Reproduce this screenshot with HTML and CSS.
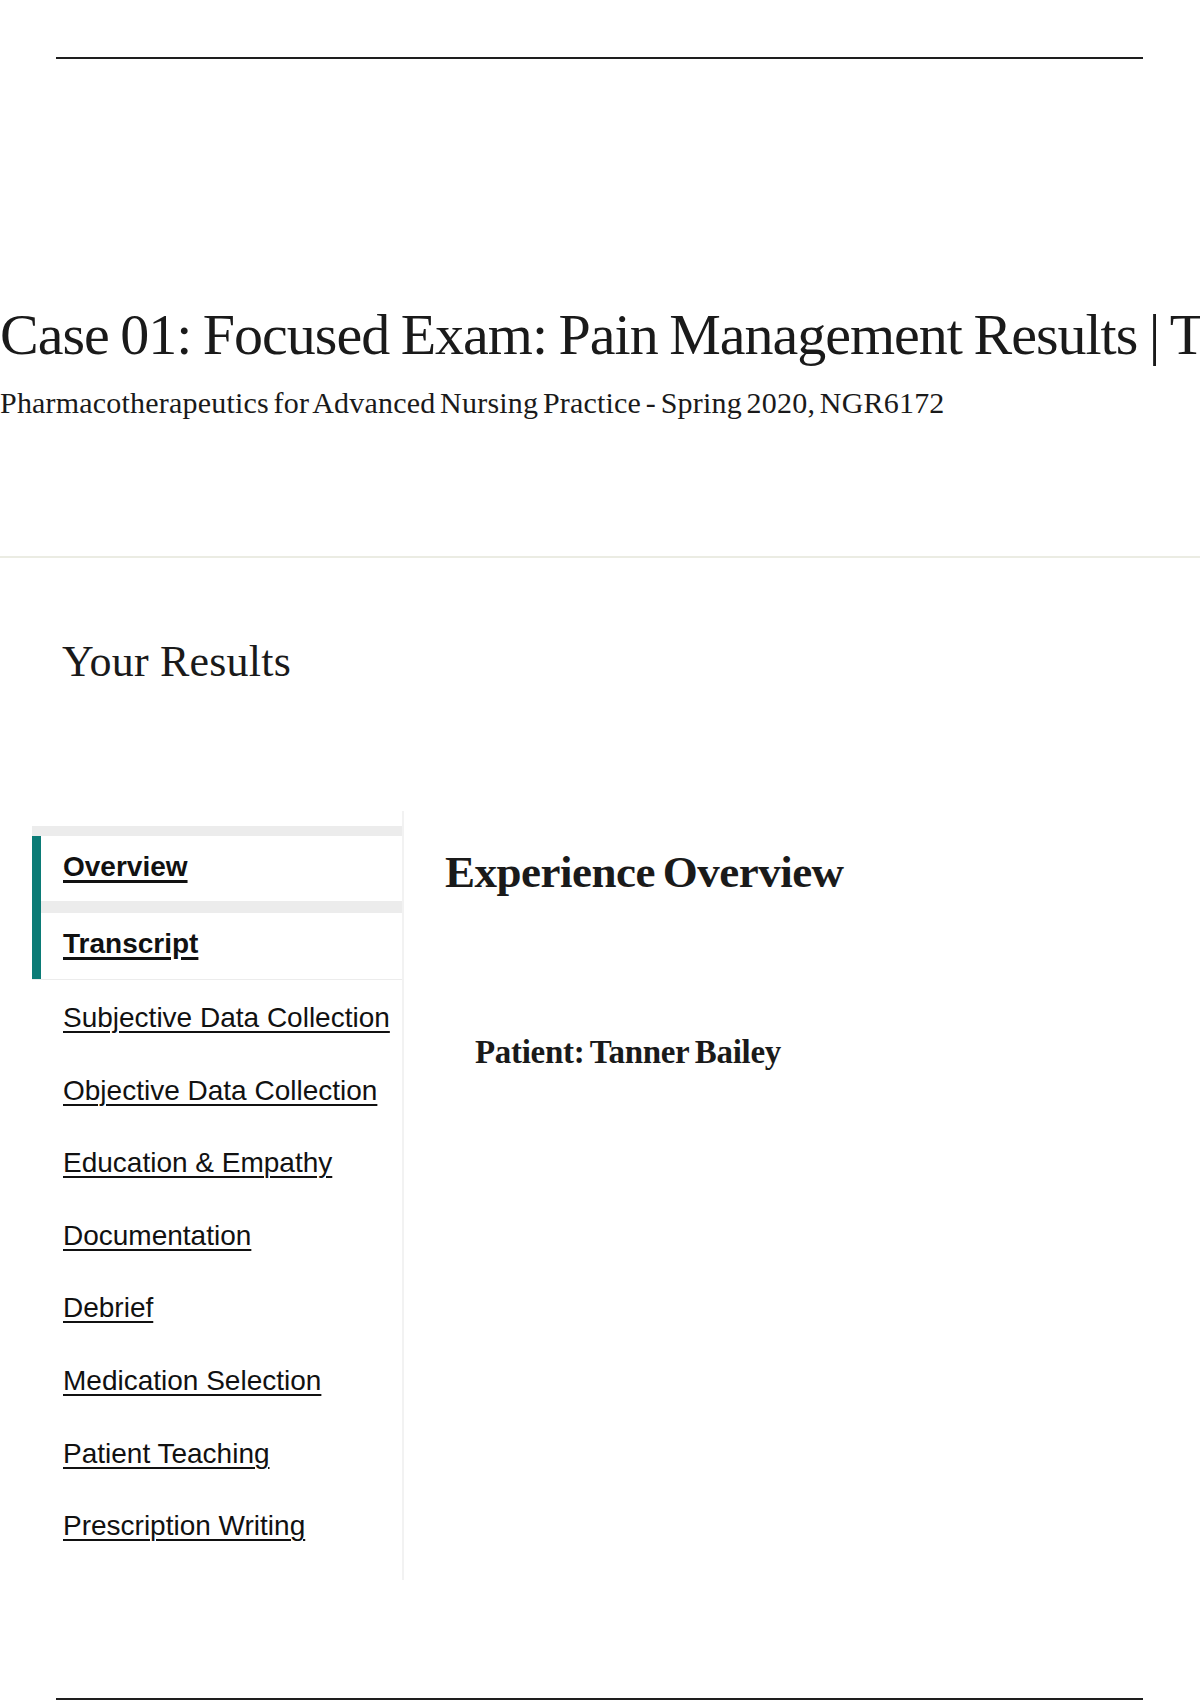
FILE: index.html
```html
<!DOCTYPE html>
<html lang="en">
<head>
<meta charset="utf-8">
<title>Case 01: Focused Exam: Pain Management Results</title>
<link rel="stylesheet" href="styles.css">
</head>
<body>
<div class="page">
  <hr class="rule rule-top">
  <header class="case-header">
    <h1 class="case-title">Case 01: Focused Exam: Pain Management Results | Tanner Bailey</h1>
    <p class="case-course">Pharmacotherapeutics for Advanced Nursing Practice - Spring 2020, NGR6172</p>
  </header>
  <hr class="divider">
  <h2 class="results-title">Your Results</h2>
  <div class="results">
    <nav class="side-nav">
      <div class="nav-tabs">
        <div class="nav-active">
          <a class="nav-item nav-strong nav-first" href="#">Overview</a>
          <a class="nav-item nav-strong nav-second" href="#">Transcript</a>
        </div>
      </div>
      <div class="nav-list">
        <a class="nav-item" href="#">Subjective Data Collection</a>
        <a class="nav-item" href="#">Objective Data Collection</a>
        <a class="nav-item" href="#">Education &amp; Empathy</a>
        <a class="nav-item" href="#">Documentation</a>
        <a class="nav-item" href="#">Debrief</a>
        <a class="nav-item" href="#">Medication Selection</a>
        <a class="nav-item" href="#">Patient Teaching</a>
        <a class="nav-item" href="#">Prescription Writing</a>
      </div>
    </nav>
    <main class="overview">
      <h3 class="overview-title">Experience Overview</h3>
      <p class="patient">Patient: Tanner Bailey</p>
    </main>
  </div>
  <hr class="rule rule-bottom">
</div>
</body>
</html>
```
FILE: styles.css
```css
html, body {
  margin: 0;
  padding: 0;
  background: #ffffff;
}
body {
  font-family: "Liberation Serif", "Times New Roman", serif;
  color: #1a1a1a;
  width: 1200px;
  overflow: hidden;
}
.page {
  width: 1200px;
  overflow: hidden;
}
.rule {
  border: 0;
  height: 2px;
  background: #1e1e1e;
  margin: 0 57px 0 56px;
}
.rule-top {
  margin-top: 57px;
}
.case-header {
  padding-top: 241px;
  white-space: nowrap;
}
.case-title {
  margin: 0;
  font-size: 58px;
  font-weight: 400;
  line-height: 70px;
  letter-spacing: -1px;
  word-spacing: -2px;
}
.case-course {
  margin: 15px 0 0;
  font-size: 30px;
  line-height: 36px;
  letter-spacing: 0.2px;
  word-spacing: -3px;
}
.divider {
  border: 0;
  height: 2px;
  background: #ebece3;
  margin: 135px 0 0;
}
.results-title {
  margin: 79px 0 0 62px;
  font-size: 44px;
  font-weight: 400;
  line-height: 50px;
  letter-spacing: 0.2px;
}
.results {
  display: flex;
  margin-top: 124px;
  margin-left: 32px;
}
.side-nav {
  width: 370px;
  display: flex;
  flex-direction: column;
  border-right: 2px solid #f2f2f2;
  padding-top: 15px;
  padding-bottom: 18px;
}
.nav-tabs {
  border-top: 10px solid #ececec;
  border-bottom: 1px solid #ececec;
}
.nav-active {
  border-left: 9px solid #0b7b76;
  display: flex;
  flex-direction: column;
}
.nav-list {
  display: flex;
  flex-direction: column;
  align-items: flex-start;
  padding-top: 1px;
}
.nav-item {
  font-family: "Liberation Sans", Arial, sans-serif;
  font-size: 28px;
  line-height: 33px;
  color: #111111;
  text-decoration: underline;
  text-decoration-thickness: 2px;
  text-underline-offset: 4px;
  padding: 20px 0 19.6px 31px;
}
.nav-strong {
  font-weight: 700;
  text-decoration-thickness: 3px;
}
.nav-first {
  padding: 14px 0 18px 22px;
  border-bottom: 12px solid #ececec;
}
.nav-second {
  padding: 14px 0 19px 22px;
}
.overview {
  padding-left: 41px;
  padding-top: 34px;
}
.overview-title {
  margin: 0;
  font-size: 45px;
  font-weight: 700;
  line-height: 54px;
  letter-spacing: -0.5px;
  word-spacing: -3px;
}
.patient {
  margin: 133px 0 0 30px;
  font-size: 33px;
  font-weight: 700;
  line-height: 40px;
  letter-spacing: -0.3px;
  word-spacing: -2px;
}
.rule-bottom {
  margin-top: 118px;
}
```
